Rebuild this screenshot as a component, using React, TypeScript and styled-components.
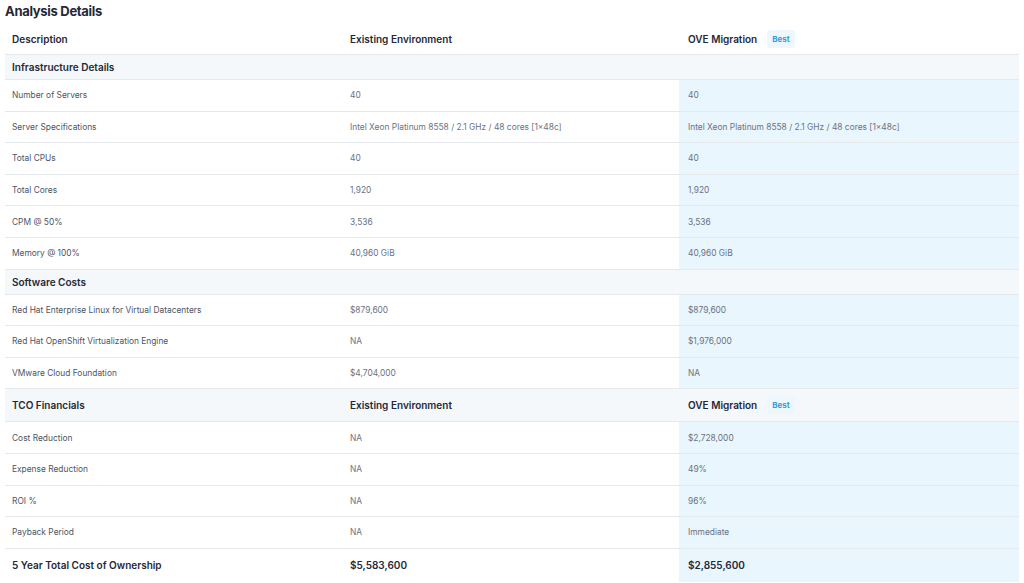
import React from "react";
import styled, { createGlobalStyle } from "styled-components";

const Global = createGlobalStyle`
  body { margin: 0; background: #fff; font-family: Inter, "Noto Sans", sans-serif; }
`;

const Page = styled.div`
  width: 1024px;
  padding: 0 5px 0 5px;
  box-sizing: border-box;
`;

const Title = styled.h2`
  margin: 0;
  padding: 3px 0 0 0;
  height: 20px;
  font-size: 13px;
  font-weight: 700;
  color: #1f2937;
  letter-spacing: -0.3px;
`;

const Table = styled.div`
  display: grid;
  grid-template-columns: 335px 339px 1fr;
`;

type Kind = "head" | "section" | "data" | "total";

const Cell = styled.div<{ $kind: Kind; $col: number; $h: number }>`
  height: ${(p) => p.$h}px;
  display: flex;
  align-items: center;
  gap: 10px;
  padding-left: ${(p) => (p.$col === 0 ? 7 : p.$col === 1 ? 10 : 9)}px;
  box-sizing: border-box;
  border-bottom: ${(p) => (p.$kind === "total" ? "none" : "1px solid #e6e9ec")};
  background: ${(p) =>
    p.$kind === "section"
      ? "#f4f8fb"
      : p.$col === 2 && (p.$kind === "data" || p.$kind === "total")
      ? "#eaf6fd"
      : "#fff"};
  font-size: ${(p) => (p.$kind === "data" ? "8.4px" : "10px")};
  font-weight: ${(p) => (p.$kind === "data" ? 400 : 600)};
  color: ${(p) => (p.$kind === "data" ? "#4b5563" : "#1f2937")};
`;

const Val = styled.span`
  color: #6b7280;
`;

const Badge = styled.span`
  background: #eef7fd;
  color: #3b9ad9;
  font-size: 8px;
  font-weight: 700;
  padding: 4px 5px;
  border-radius: 3px;
`;

type Row = { kind: Kind; cells: [string, string, string]; badge?: boolean; h?: number };

const rows: Row[] = [
  { kind: "head", cells: ["Description", "Existing Environment", "OVE Migration"], badge: true, h: 32 },
  { kind: "section", cells: ["Infrastructure Details", "", ""], h: 25 },
  { kind: "data", cells: ["Number of Servers", "40", "40"] },
  { kind: "data", cells: ["Server Specifications", "Intel Xeon Platinum 8558 / 2.1 GHz / 48 cores [1×48c]", "Intel Xeon Platinum 8558 / 2.1 GHz / 48 cores [1×48c]"] },
  { kind: "data", cells: ["Total CPUs", "40", "40"] },
  { kind: "data", cells: ["Total Cores", "1,920", "1,920"] },
  { kind: "data", cells: ["CPM @ 50%", "3,536", "3,536"] },
  { kind: "data", cells: ["Memory @ 100%", "40,960 GiB", "40,960 GiB"] },
  { kind: "section", cells: ["Software Costs", "", ""], h: 25 },
  { kind: "data", cells: ["Red Hat Enterprise Linux for Virtual Datacenters", "$879,600", "$879,600"] },
  { kind: "data", cells: ["Red Hat OpenShift Virtualization Engine", "NA", "$1,976,000"] },
  { kind: "data", cells: ["VMware Cloud Foundation", "$4,704,000", "NA"] },
  { kind: "section", cells: ["TCO Financials", "Existing Environment", "OVE Migration"], badge: true, h: 33 },
  { kind: "data", cells: ["Cost Reduction", "NA", "$2,728,000"] },
  { kind: "data", cells: ["Expense Reduction", "NA", "49%"] },
  { kind: "data", cells: ["ROI %", "NA", "96%"] },
  { kind: "data", cells: ["Payback Period", "NA", "Immediate"] },
  { kind: "total", cells: ["5 Year Total Cost of Ownership", "$5,583,600", "$2,855,600"], h: 33 },
];

export default function App() {
  return (
    <Page>
      <Global />
      <Title>Analysis Details</Title>
      <Table>
        {rows.map((r, i) =>
          r.cells.map((c, j) => (
            <Cell key={`${i}-${j}`} $kind={r.kind} $col={j} $h={r.h ?? 31.6}>
              {r.kind === "data" && j > 0 ? <Val>{c}</Val> : c}
              {r.badge && j === 2 && <Badge>Best</Badge>}
            </Cell>
          ))
        )}
      </Table>
    </Page>
  );
}
